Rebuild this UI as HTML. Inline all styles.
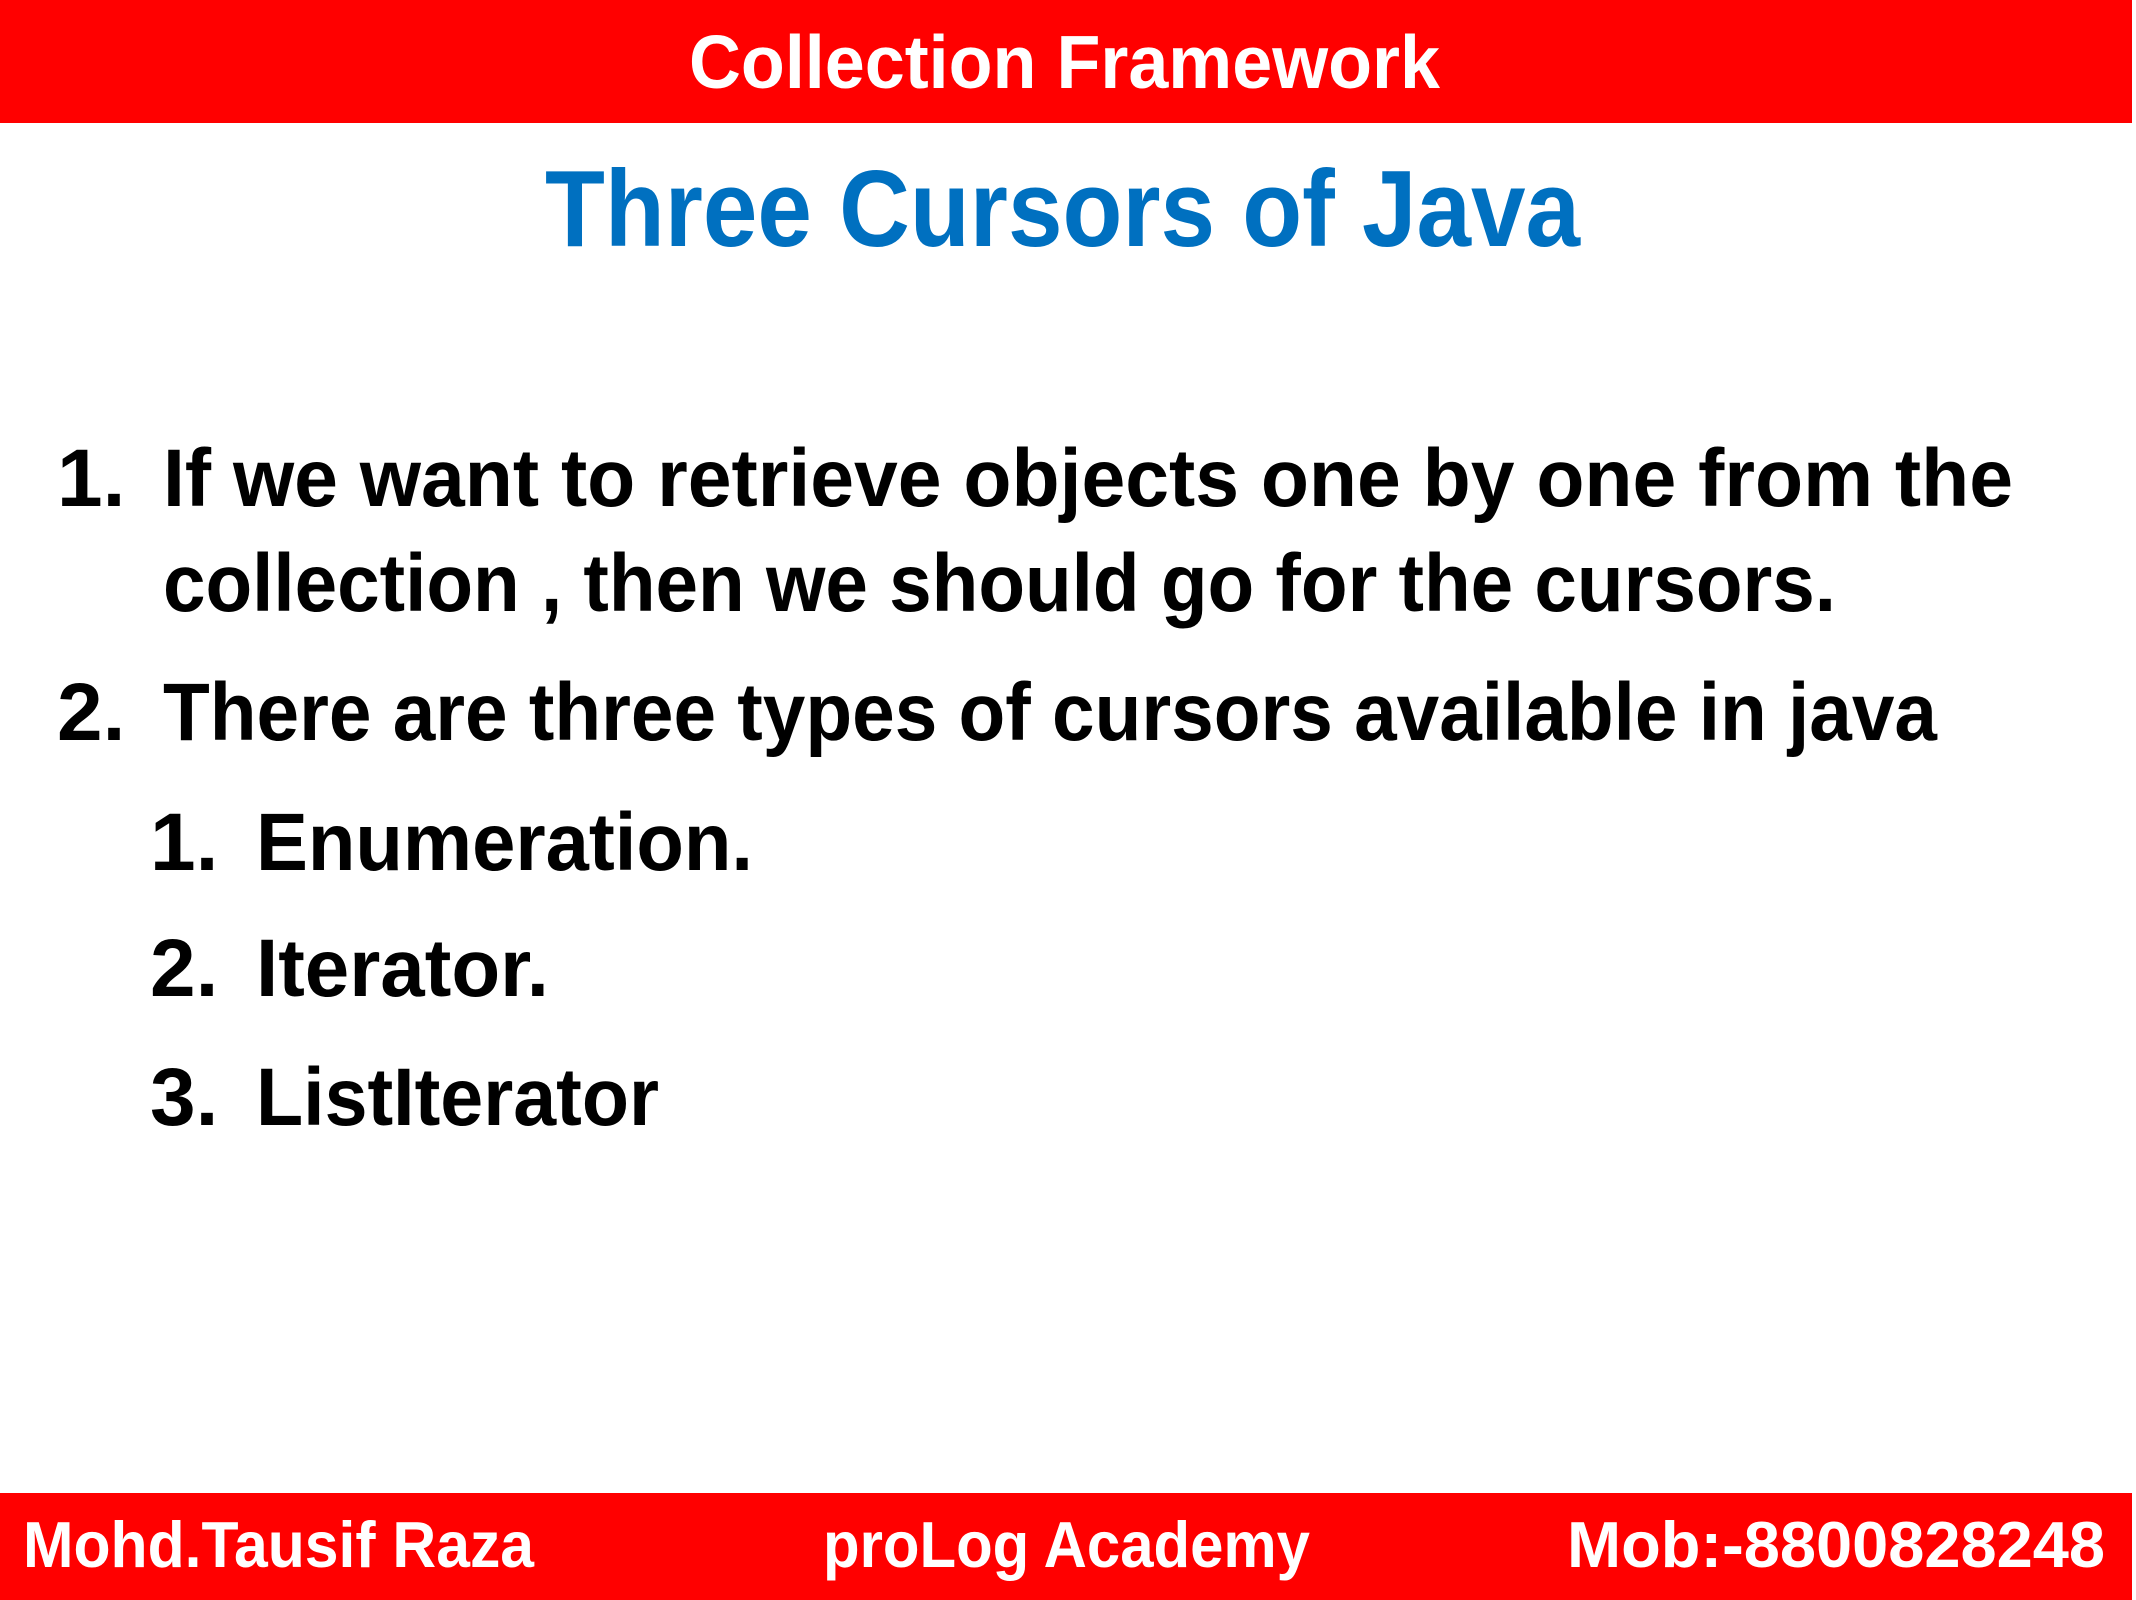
<!DOCTYPE html>
<html><head><meta charset="utf-8"><style>
html,body{margin:0;padding:0;}
body{width:2136px;height:1600px;position:relative;background:#fff;overflow:hidden;font-family:"Liberation Sans",sans-serif;font-weight:bold;}
.bar{position:absolute;left:0;width:2132px;background:#ff0000;}
.t{position:absolute;white-space:nowrap;line-height:1;transform-origin:0 0;}
</style></head><body>
<div class="bar" style="top:0;height:123px"></div>
<div class="bar" style="top:1493px;height:107px"></div>

<div class="t" data-w="751" style="left:689px;top:25px;font-size:75px;color:#fff">Collection Framework</div>
<div class="t" data-w="1035" style="left:545px;top:155px;font-size:109px;color:#0070c0">Three Cursors of Java</div>

<div class="t" style="left:57px;top:438px;font-size:82px;color:#000">1.</div>
<div class="t" data-w="1850" style="left:163px;top:438px;font-size:82px;color:#000">If we want to retrieve objects one by one from the</div>
<div class="t" data-w="1673" style="left:163px;top:543px;font-size:82px;color:#000">collection , then we should go for the cursors.</div>
<div class="t" style="left:57px;top:672px;font-size:82px;color:#000">2.</div>
<div class="t" data-w="1774" style="left:163px;top:672px;font-size:82px;color:#000">There are three types of cursors available in java</div>
<div class="t" style="left:150px;top:802px;font-size:82px;color:#000">1.</div>
<div class="t" data-w="497" style="left:256px;top:802px;font-size:82px;color:#000">Enumeration.</div>
<div class="t" style="left:150px;top:928px;font-size:82px;color:#000">2.</div>
<div class="t" data-w="293" style="left:256px;top:928px;font-size:82px;color:#000">Iterator.</div>
<div class="t" style="left:150px;top:1057px;font-size:82px;color:#000">3.</div>
<div class="t" data-w="403" style="left:256px;top:1057px;font-size:82px;color:#000">ListIterator</div>

<div class="t" data-w="511" style="left:23px;top:1512px;font-size:65px;color:#fff">Mohd.Tausif Raza</div>
<div class="t" data-w="487" style="left:823px;top:1512px;font-size:65px;color:#fff">proLog Academy</div>
<div class="t" data-w="538" style="left:1567px;top:1512px;font-size:65px;color:#fff">Mob:-8800828248</div>
<script>
document.querySelectorAll('.t[data-w]').forEach(function(e){
  var w=e.getBoundingClientRect().width;var tw=+e.getAttribute('data-w');
  if(w>0)e.style.transform='scaleX('+(tw/w)+')';
});
</script>
</body></html>
